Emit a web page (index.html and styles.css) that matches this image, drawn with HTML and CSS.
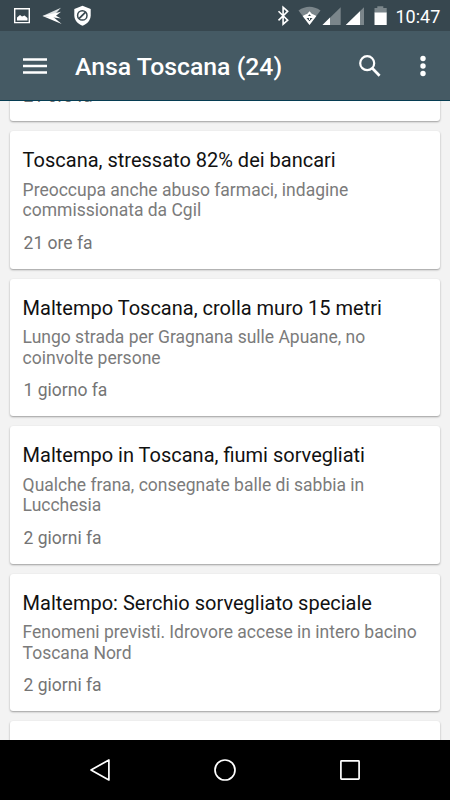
FILE: index.html
```html
<!DOCTYPE html>
<html lang="it">
<head>
<meta charset="utf-8">
<title>Ansa Toscana</title>
<link rel="stylesheet" href="styles.css">
</head>
<body>
<div class="screen">
  <div class="status">
    <svg width="110" height="31" viewBox="0 0 110 31">
      <path d="M14.700 8.700h14.600v13.900H14.700z" fill="none" stroke="#fff" stroke-width="1.400"/>
      <path d="M17 20.500v-3l3-2.500 2 1.500 2.500-1 3 2.500v2.500z" fill="#fff"/>
      <path d="M42.500 16L61 7.700l-7.200 7.700z" fill="#dce1e3"/>
      <path d="M42.500 16l18.500-4.200-5 4 5 2.800z" fill="#fff"/>
      <path d="M42.500 16l10.500.7 8.700 7.300z" fill="#fff"/>
      <path d="M82.500 5.700l8.200 3.200v6.300c0 5-3.500 8.800-8.200 10.500-4.700-1.700-8.200-5.500-8.200-10.500V8.900z" fill="#fff"/>
      <circle cx="82.300" cy="15.400" r="4.700" fill="none" stroke="#37474f" stroke-width="1.500"/>
      <path d="M79 18.600l6.600-6.500" stroke="#37474f" stroke-width="1.800"/>
    </svg>
    <svg class="system" width="124" height="31" viewBox="270 0 124 31">
      <path d="M278.500 11.200l9.200 9-4.600 4V7.300l4.600 4.100-9.200 9" fill="none" stroke="#fff" stroke-width="1.600"/>
      <path d="M298.500 10.600q11-7.500 22 0l-11 14.400z" fill="#7b868b"/>
      <path d="M302.600 16q6.900-4.500 13.800 0l-6.900 9z" fill="#fff"/>
      <path d="M309.500 11.300l-3.500 4h7z" fill="#fff"/>
      <path d="M309.500 14.200l-1.500 1.800h3zM306.500 18h6l-3 3.300z" fill="#37474f"/>
      <path d="M309.500 16v4" stroke="#fff"/>
      <path d="M340.700 7.300V25H322.500z" fill="#7b868b"/>
      <path d="M330 17.600V25h-7.500z" fill="#fff"/>
      <path d="M364 7.300V25h-18.200z" fill="#7b868b"/>
      <path d="M360 11.200V25h-14.200z" fill="#fff"/>
      <path d="M374.500 8h2.800V6.300h6V8h3.400v5h-12.200z" fill="#7b868b"/>
      <path d="M374.500 12.500h12.200V25h-12.200z" fill="#fff"/>
    </svg>
    <span class="clock">10:47</span>
  </div>
  <header class="bar">
    <svg class="menu" width="24" height="18" viewBox="0 0 24 18"><path d="M0 2.500h24M0 9h24M0 15.500h24" stroke="#fff" stroke-width="2.300"/></svg>
    <h1 class="heading">Ansa Toscana (24)</h1>
    <svg class="search" width="24" height="24" viewBox="0 0 24 24"><circle cx="9.200" cy="9.200" r="7" fill="none" stroke="#fff" stroke-width="2.200"/><path d="M14.300 14.300l7.300 7.400" stroke="#fff" stroke-width="2.700"/></svg>
    <svg class="more" width="8" height="24" viewBox="0 0 8 24"><g fill="#fff"><circle cx="4" cy="4.500" r="2.700"/><circle cx="4" cy="12" r="2.700"/><circle cx="4" cy="19.500" r="2.700"/></g></svg>
  </header>
  <main class="feed">
    <article class="card card-first"><p class="time">21 ore fa</p></article>
    <article class="card">
      <h2 class="title">Toscana, stressato 82% dei bancari</h2>
      <p class="summary">Preoccupa anche abuso farmaci, indagine<br>commissionata da Cgil</p>
      <p class="time">21 ore fa</p>
    </article>
    <article class="card">
      <h2 class="title">Maltempo Toscana, crolla muro 15 metri</h2>
      <p class="summary">Lungo strada per Gragnana sulle Apuane, no<br>coinvolte persone</p>
      <p class="time">1 giorno fa</p>
    </article>
    <article class="card">
      <h2 class="title">Maltempo in Toscana, fiumi sorvegliati</h2>
      <p class="summary">Qualche frana, consegnate balle di sabbia in<br>Lucchesia</p>
      <p class="time">2 giorni fa</p>
    </article>
    <article class="card">
      <h2 class="title">Maltempo: Serchio sorvegliato speciale</h2>
      <p class="summary">Fenomeni previsti. Idrovore accese in intero bacino<br>Toscana Nord</p>
      <p class="time">2 giorni fa</p>
    </article>
    <article class="card"></article>
  </main>
  <nav class="nav">
    <svg width="24" height="24" viewBox="0 0 24 24"><path d="M20.900 2v20L3 12z" fill="none" stroke="#fff" stroke-width="1.700" stroke-linejoin="round"/></svg>
    <svg width="24" height="24" viewBox="0 0 24 24"><circle cx="12" cy="12" r="10" fill="none" stroke="#fff" stroke-width="1.700"/></svg>
    <svg width="24" height="24" viewBox="0 0 24 24"><rect x="2.900" y="2.900" width="18.200" height="18.200" rx=".6" fill="none" stroke="#fff" stroke-width="1.700"/></svg>
  </nav>
</div>
</body>
</html>
```
FILE: styles.css
```css
* { box-sizing: border-box; }
body, h1, h2, p { margin: 0; font-weight: 400; }
body { font-family: Roboto, sans-serif; background: #f3f3f3; }
svg { display: block; flex: none; }
.screen { width: 450px; height: 800px; display: flex; flex-direction: column; overflow: hidden; }
.status { height: 31px; flex: none; display: flex; background: #37474f; color: #fff; }
.system { margin-left: 160px; }
.clock { margin-left: 1.5px; font-size: 18px; line-height: 33px; white-space: nowrap; }
.bar { height: 70px; flex: none; display: flex; align-items: center; background: #455a64; border-bottom: 1px solid #063d52; color: #fff; }
.menu { margin-left: 23px; }
.heading { flex: 1; margin-left: 28px; padding-top: 2px; font-size: 24.8px; font-weight: 500; line-height: 30px; white-space: nowrap; }
.search { margin-right: 37px; }
.more { margin-right: 23.5px; }
.feed { flex: 1; min-height: 0; overflow: hidden; display: flex; flex-direction: column; gap: 10px; padding: 0 10px; background: #f3f3f3; }
.card { height: 137.5px; flex: none; padding: 17.4px 12.6px 0; border-radius: 3px; background: #fff; box-shadow: 0 1px 2px rgba(0, 0, 0, .36); white-space: nowrap; }
.card-first { margin-top: -117.5px; padding-top: 90.6px; }
.title { font-size: 20px; line-height: 24px; color: #111; }
.summary { margin-top: 7.3px; font-size: 17.5px; line-height: 20.5px; color: #7b7b7b; }
.time { margin: 12.3px 0 0 1px; font-size: 17.5px; line-height: 20px; color: #747474; }
.nav { height: 60px; flex: none; display: flex; align-items: center; justify-content: center; gap: 101px; background: #000; }
```
